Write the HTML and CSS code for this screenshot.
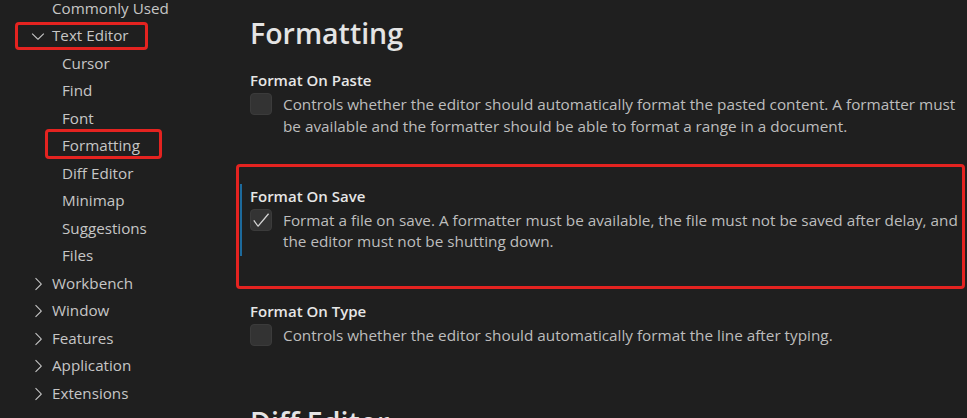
FILE: index.html
```html
<!DOCTYPE html>
<html lang="en">
<head>
<meta charset="utf-8">
<title>Settings - Formatting</title>
<link rel="stylesheet" href="styles.css">
</head>
<body>
<div class="app">
  <nav class="sidebar">
    <ul class="tree">
      <li class="row child-top"><span class="label">Commonly Used</span></li>
      <li class="row top marked-editor">
        <svg class="twistie" viewBox="0 0 16 16"><path d="M7.976 10.072l4.357-4.357.62.618L8.284 11h-.618L3 6.333l.619-.618 4.357 4.357z"/></svg>
        <span class="label">Text Editor</span>
      </li>
      <li class="row child"><span class="label">Cursor</span></li>
      <li class="row child"><span class="label">Find</span></li>
      <li class="row child"><span class="label">Font</span></li>
      <li class="row child marked-format"><span class="label">Formatting</span></li>
      <li class="row child"><span class="label">Diff Editor</span></li>
      <li class="row child"><span class="label">Minimap</span></li>
      <li class="row child"><span class="label">Suggestions</span></li>
      <li class="row child"><span class="label">Files</span></li>
      <li class="row top">
        <svg class="twistie" viewBox="0 0 16 16"><path d="M10.072 8.024L5.715 3.667l.618-.62L11 7.716v.618L6.333 13l-.618-.619 4.357-4.357z"/></svg>
        <span class="label">Workbench</span>
      </li>
      <li class="row top">
        <svg class="twistie" viewBox="0 0 16 16"><path d="M10.072 8.024L5.715 3.667l.618-.62L11 7.716v.618L6.333 13l-.618-.619 4.357-4.357z"/></svg>
        <span class="label">Window</span>
      </li>
      <li class="row top">
        <svg class="twistie" viewBox="0 0 16 16"><path d="M10.072 8.024L5.715 3.667l.618-.62L11 7.716v.618L6.333 13l-.618-.619 4.357-4.357z"/></svg>
        <span class="label">Features</span>
      </li>
      <li class="row top">
        <svg class="twistie" viewBox="0 0 16 16"><path d="M10.072 8.024L5.715 3.667l.618-.62L11 7.716v.618L6.333 13l-.618-.619 4.357-4.357z"/></svg>
        <span class="label">Application</span>
      </li>
      <li class="row top">
        <svg class="twistie" viewBox="0 0 16 16"><path d="M10.072 8.024L5.715 3.667l.618-.62L11 7.716v.618L6.333 13l-.618-.619 4.357-4.357z"/></svg>
        <span class="label">Extensions</span>
      </li>
    </ul>
  </nav>
  <main class="main">
    <h2 class="group-title">Formatting</h2>

    <section class="setting">
      <div class="setting-title">Format On Paste</div>
      <div class="setting-body">
        <span class="checkbox"></span>
        <p class="desc">Controls whether the editor should automatically format the pasted content. A formatter must be available and the formatter should be able to format a range in a document.</p>
      </div>
    </section>

    <section class="setting focused marked-save">
      <div class="setting-title">Format On Save</div>
      <div class="setting-body">
        <span class="checkbox checked"><svg viewBox="0 0 16 16"><path d="M14.431 3.323l-8.47 10-.79-.036-3.35-4.77.818-.574 2.978 4.24 8.051-9.506.764.646z"/></svg></span>
        <p class="desc">Format a file on save. A formatter must be available, the file must not be saved after delay, and the editor must not be shutting down.</p>
      </div>
    </section>

    <section class="setting">
      <div class="setting-title">Format On Type</div>
      <div class="setting-body">
        <span class="checkbox"></span>
        <p class="desc">Controls whether the editor should automatically format the line after typing.</p>
      </div>
    </section>

    <h2 class="group-title next">Diff Editor</h2>
  </main>
</div>
</body>
</html>
```
FILE: styles.css
```css
* { box-sizing: border-box; }

html, body {
  margin: 0;
  padding: 0;
  height: 418px;
  overflow: hidden;
  background: #1f1f1f;
}

body {
  font-family: "Open Sans", "Noto Sans", sans-serif;
  color: #c4c4c4;
}

.app {
  display: flex;
  height: 418px;
}

.sidebar {
  width: 240px;
  flex: none;
}

.tree {
  list-style: none;
  margin: -5.25px 0 0 0;
  padding: 0;
}

.row {
  position: relative;
  display: flex;
  align-items: center;
  height: 27.5px;
  font-size: 15.2px;
  line-height: 27.5px;
  color: #c6c6c6;
  white-space: nowrap;
}

.row.top,
.row.child-top {
  padding-left: 28px;
}

.row.child-top .label {
  margin-left: 24px;
}

.row.child {
  padding-left: 62px;
}

.twistie {
  width: 20px;
  height: 20px;
  fill: #c5c5c5;
  flex: none;
  margin-right: 4px;
}

/* red annotation boxes */
.marked-editor::after,
.marked-format::after,
.marked-save::after {
  content: "";
  position: absolute;
  border: 3px solid #e42320;
  border-radius: 4px;
  pointer-events: none;
}

.marked-editor::after {
  left: 15px;
  width: 127px;
  top: 0;
  bottom: 0;
}

.marked-format::after {
  left: 45px;
  width: 111px;
  top: -3px;
  bottom: 1px;
}

.main {
  flex: 1;
  min-width: 0;
  padding: 13px 5px 0 0;
}

.group-title {
  margin: 0 0 15px 10px;
  font-size: 28.5px;
  line-height: 40px;
  font-weight: 600;
  color: #e4e4e4;
}

.group-title.next {
  margin-top: 52.5px;
}

.setting {
  position: relative;
  padding: 1px 0 3px 8px;
  border-left: 2px solid transparent;
  margin-bottom: 43.5px;
}

.setting.focused {
  border-left-color: #1d6a9c;
}

.marked-save::after {
  left: -6px;
  right: -3px;
  top: -20px;
  bottom: -33px;
}

.setting-title {
  font-size: 15px;
  line-height: 22px;
  font-weight: 600;
  color: #e6e6e6;
}

.setting-body {
  display: flex;
  align-items: flex-start;
  gap: 11px;
  margin-top: 3px;
}

.checkbox {
  flex: none;
  width: 22px;
  height: 22px;
  margin-top: -1px;
  border-radius: 4px;
  background: #333333;
  border: 1px solid #3b3b3b;
  display: flex;
  align-items: center;
  justify-content: center;
}

.checkbox svg {
  width: 22px;
  height: 22px;
  fill: #d4d4d4;
}

.desc {
  margin: 0;
  font-size: 15.3px;
  line-height: 21.5px;
  color: #bdbdbd;
}
```
